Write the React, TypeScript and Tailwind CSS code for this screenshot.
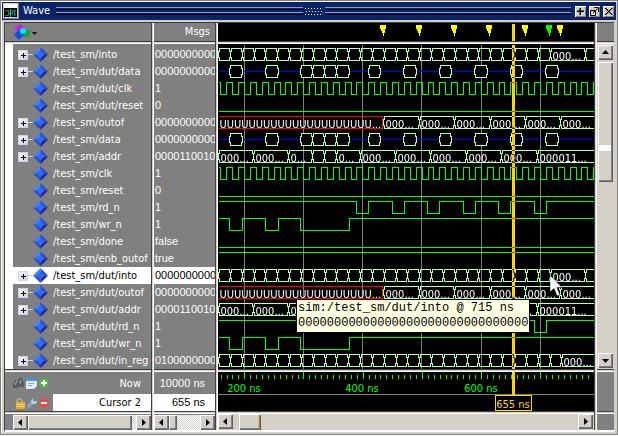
import React from 'react';

type Kind = 'into' | 'data' | 'clk' | 'low' | 'high' | 'outof' | 'addr' | 'rd' | 'wr' | 'inreg';
type Signal = { name: string; value: string; kind: Kind; bus?: boolean; selected?: boolean };

const SIGNALS: Signal[] = [
  { name: '/test_sm/into', value: '0000000000', kind: 'into', bus: true },
  { name: '/test_sm/dut/data', value: '0000000000', kind: 'data', bus: true },
  { name: '/test_sm/dut/clk', value: '1', kind: 'clk' },
  { name: '/test_sm/dut/reset', value: '0', kind: 'low' },
  { name: '/test_sm/outof', value: '0000000000', kind: 'outof', bus: true },
  { name: '/test_sm/data', value: '0000000000', kind: 'data', bus: true },
  { name: '/test_sm/addr', value: '0000110010', kind: 'addr', bus: true },
  { name: '/test_sm/clk', value: '1', kind: 'clk' },
  { name: '/test_sm/reset', value: '0', kind: 'low' },
  { name: '/test_sm/rd_n', value: '1', kind: 'rd' },
  { name: '/test_sm/wr_n', value: '1', kind: 'wr' },
  { name: '/test_sm/done', value: 'false', kind: 'low' },
  { name: '/test_sm/enb_outof', value: 'true', kind: 'high' },
  { name: '/test_sm/dut/into', value: '0000000000', kind: 'into', bus: true, selected: true },
  { name: '/test_sm/dut/outof', value: '0000000000', kind: 'outof', bus: true },
  { name: '/test_sm/dut/addr', value: '0000110010', kind: 'addr', bus: true },
  { name: '/test_sm/dut/rd_n', value: '1', kind: 'rd' },
  { name: '/test_sm/dut/wr_n', value: '1', kind: 'wr' },
  { name: '/test_sm/dut/in_reg', value: '0100000000', kind: 'inreg', bus: true },
];

/* Wave coordinates are relative to the left edge of the wave pane. */
const END = 376;
const STEP = 11.84;
const GRID = [26, 85, 144, 203, 263, 322];
const CURSOR = 294;

type Cell = [number, number, string?];
const steady: Cell[] = Array.from({ length: 28 }, (_, i): Cell => [
  Math.round(STEP * i),
  Math.round(STEP * (i + 1)),
]);
const CELLS: Record<string, Cell[]> = {
  into: [...steady, [332, 367, '000...'], [367, END + 6]],
  inreg: [...steady, [332, 343], [343, END + 6, '000...']],
  data: [
    [11, 24], [47, 60], [82, 94], [94, 106], [106, 118], [118, 131], [150, 162],
    [185, 198], [221, 233], [256, 269], [292, 304], [327, 340],
  ],
  outof: [
    [165, 201, '000...'], [201, 236, '000...'], [236, 272, '000...'],
    [272, 307, '000...'], [307, 342, '000...'], [342, END + 6, '000...'],
  ],
  addr: [
    [0, 35, '000...'], [35, 70, '000...'], [70, 94, '0...'], [94, 106], [106, 118],
    [118, 142, '0...'], [142, 177, '000...'], [177, 212, '000...'], [212, 248, '000...'],
    [248, 283, '000...'], [283, 319, '000...'], [319, END + 6, '000011...'],
  ],
};
const EDGES: Record<string, number[]> = {
  rd: [138, 150, 174, 186, 209, 221, 245, 257, 280, 292, 316, 328],
  wr: [11, 24, 47, 60, 82, 131],
  clk: Array.from({ length: 64 }, (_, i) => Math.round(2.3 + (STEP / 2) * i)),
  high: [],
};

function busCell([a, b]: Cell, top: number) {
  return `M${a} ${top + 3}H${a + 1}V${top}H${b - 1}V${top + 3}H${b}V${top + 9}H${b - 1}V${top + 12}H${a + 1}V${top + 9}H${a}Z`;
}

function Trace({ kind, top }: { kind: Kind; top: number }) {
  if (kind === 'low') return <path d={`M0 ${top + 12}H${END}`} stroke="#00ff00" />;
  if (kind in EDGES) {
    let low = false;
    let d = `M0 ${top}`;
    for (const x of EDGES[kind]) {
      if (x > END) break;
      low = !low;
      d += `H${x}V${low ? top + 12 : top}`;
    }
    return <path d={`${d}H${END}`} stroke="#00ff00" />;
  }
  return (
    <>
      {kind === 'data' && <path d={`M0 ${top + 6}H${END}`} stroke="#0000ff" />}
      {CELLS[kind].map((cell) => (
        <React.Fragment key={cell[0]}>
          <path d={busCell(cell, top)} stroke="#b4ffb4" fill={kind === 'data' ? '#000000' : 'none'} />
          {cell[2] && (
            <text x={cell[0] + 2} y={top + 11} fill="#ffffff" stroke="none">{cell[2]}</text>
          )}
        </React.Fragment>
      ))}
      {kind === 'outof' && (
        <>
          <path d={`M0 ${top}H164V${top + 12}H0`} stroke="#ff0000" />
          <text x={1} y={top + 11} fill="#ffffff" stroke="none">UUUUUUUUUUUUUUUUUUUUU...</text>
        </>
      )}
    </>
  );
}

function Waves() {
  return (
    <svg className="isolate block h-full w-full text-[11px]" fill="none" shapeRendering="crispEdges" aria-label="Waveforms">
      <g transform="translate(.5 .5)">
        {GRID.map((x) => <path key={x} d={`M${x} 0V325`} stroke="#808080" />)}
        {SIGNALS.map((s, i) => <Trace key={s.name} kind={s.kind} top={4 + i * 17} />)}
      </g>
      <rect x={CURSOR} y="1" width="3" height="324" fill="#ffd700" className="mix-blend-difference" />
    </svg>
  );
}

function Markers() {
  return (
    <svg className="block h-full w-full" shapeRendering="crispEdges" aria-label="Markers">
      {[165, 201, 236, 271, 307, 331, 342].map((x) => (
        <path
          key={x}
          transform={`translate(${x - 3} 2)`}
          fill={x === 331 ? '#00ff00' : '#ffff00'}
          d="M0 0H6V4H5V8H4V11H3V8H2V6H1V4H0Z"
        />
      ))}
      <rect x={CURSOR} y="1" width="3" height="17" fill="#ffd700" />
    </svg>
  );
}

function TimeScale() {
  return (
    <svg className="block h-full w-full text-[11px]" shapeRendering="crispEdges" aria-label="Time scale">
      {Array.from({ length: 63 }, (_, i) => {
        const major = i % 10 === 4;
        return (
          <rect key={i} x={Math.round(2.6 + i * 5.92)} y={major ? 0 : 3} width="1" height={major ? 7 : 4} fill="#00ff00" />
        );
      })}
      <rect x="0" y="22" width="100%" height="1" fill="#808080" />
      <g fill="#00ff00" textAnchor="middle">
        <text x="26" y="20">200 ns</text>
        <text x="144" y="20">400 ns</text>
        <text x="263" y="20">600 ns</text>
      </g>
      <rect x={CURSOR} y="0" width="3" height="23" fill="#ffd700" />
      <path d="M277.5 23.5H313.5V38.5H277.5Z" fill="#000000" stroke="#ffd700" />
      <text x="295" y="36" fill="#ffd700" textAnchor="middle">655 ns</text>
    </svg>
  );
}

const raised =
  'bg-[#d4d0c8] shadow-[inset_1px_1px_#ffffff,inset_-1px_-1px_#606060,inset_-2px_-2px_#808080]';

function Arrow({ dir, label }: { dir: 'left' | 'right' | 'up' | 'down'; label: string }) {
  const shapes = {
    left: 'M9 4V11L5 7.5Z',
    right: 'M6 4V11L10 7.5Z',
    up: 'M4 9H11L7.5 5Z',
    down: 'M4 6H11L7.5 10Z',
  };
  return (
    <button type="button" aria-label={label} className={`h-[15px] w-[15px] shrink-0 ${raised}`}>
      <svg className="block" width="15" height="15"><path d={shapes[dir]} fill="#000000" /></svg>
    </button>
  );
}

const trough = 'bg-[#d4d0c8] bg-[conic-gradient(#ffffff_25%,#d4d0c8_0_50%,#ffffff_0_75%,#d4d0c8_0)] bg-[length:2px_2px]';

function HSep() {
  return (
    <div className="h-[3px] shrink-0 border-t border-b border-t-[#404040] border-b-white bg-[#d4d0c8]" />
  );
}

function VSep() {
  return <div className="w-[3px] shrink-0 border-r border-l border-l-[#404040] border-r-white bg-[#d4d0c8]" />;
}

function Pane(props: {
  className: string;
  header: React.ReactNode;
  body: React.ReactNode;
  footer: React.ReactNode;
  scroll: React.ReactNode;
}) {
  return (
    <section className={`flex flex-col overflow-hidden ${props.className}`}>
      <div className="h-[18px] shrink-0">{props.header}</div>
      <HSep />
      <div className="h-[325px] shrink-0">{props.body}</div>
      <HSep />
      <div className="h-[39px] shrink-0">{props.footer}</div>
      <HSep />
      <div className="flex h-4 shrink-0 items-center">{props.scroll}</div>
    </section>
  );
}

function Diamond() {
  return (
    <svg width="15" height="15" className="shrink-0" aria-hidden="true">
      <path d="M7.5 0L0 7.5H7.5Z" fill="#4f7fe8" />
      <path d="M7.5 0L15 7.5H7.5Z" fill="#2b50c8" />
      <path d="M0 7.5L7.5 15V7.5Z" fill="#3050c0" />
      <path d="M15 7.5L7.5 15V7.5Z" fill="#20209a" />
      <path d="M7.5 3.5L11.5 7.5L7.5 11.5L3.5 7.5Z" fill="#2a6cff" />
    </svg>
  );
}

function NameRow({ s }: { s: Signal }) {
  return (
    <li className={`flex h-[17px] items-center pl-[5px] ${s.selected ? 'bg-white text-black' : ''}`}>
      <span className="flex w-[15px] shrink-0 items-center">
        {s.bus && (
          <>
            <button
              type="button"
              aria-label={`Expand ${s.name}`}
              className="h-[10px] w-[10px] shrink-0 rounded-[1px] bg-linear-to-br from-white to-[#c8d0e4] shadow-[inset_0_0_0_1px_#d0d4e0]"
            >
              <svg className="block" width="10" height="10" shapeRendering="crispEdges">
                <path d="M3 5H8V6H3ZM5 3H6V8H5Z" fill="#000000" />
              </svg>
            </button>
            <span className="h-px grow bg-[#d4d4d4]" />
          </>
        )}
      </span>
      <Diamond />
      <span className="pl-[5px] whitespace-nowrap">{s.name}</span>
    </li>
  );
}

function IconButton({ label, children }: { label: string; children: React.ReactNode }) {
  return (
    <button type="button" aria-label={label} className="h-3 w-3 shrink-0">
      <svg className="block" width="12" height="12">{children}</svg>
    </button>
  );
}

function TitleButton({ label, d }: { label: string; d: string }) {
  return (
    <button type="button" aria-label={label} className="h-[11px] w-[11px] bg-[#d4d0c8] shadow-[inset_1px_1px_#ffffff,inset_-1px_-1px_#808080]">
      <svg className="block" width="11" height="11" fill="none" stroke="#000000">
        <path d={d} />
      </svg>
    </button>
  );
}

function Groove() {
  return (
    <div className="flex grow flex-col gap-[2px]">
      <div className="h-[3px] border-t border-b border-t-[#8c9cc4] border-b-black" />
      <div className="h-[3px] border-t border-b border-t-[#8c9cc4] border-b-black" />
    </div>
  );
}

function TitleBar() {
  return (
    <header className="flex h-[18px] items-center bg-[#0a246a] pr-[2px] pl-[1px] text-white">
      <svg width="16" height="16" className="shrink-0" shapeRendering="crispEdges" aria-hidden="true">
        <path d="M0 0H16V16H0Z" fill="#808080" />
        <path d="M0 0H15V15H0Z" fill="#d4d0c8" />
        <path d="M1 1H14V5H1Z" fill="#ffffff" />
        <path d="M1 5H14V14H1Z" fill="#000000" />
        <path d="M2 7.5H5V10.5H9V7.5H13M2 12.5H5V10.5M11 7.5V11.5H13" fill="none" stroke="#109048" />
        <path d="M7.5 6V14" stroke="#00d0d0" />
        <path d="M9 12.5H13" stroke="#2020c0" />
      </svg>
      <h1 className="pr-[6px] pl-1 text-[11px] leading-4">Wave</h1>
      <Groove />
      <svg width="22" height="9" className="shrink-0" shapeRendering="crispEdges" aria-hidden="true">
        {[0, 1, 2].map((r) =>
          [0, 1, 2, 3, 4, 5].map((c) => (
            <rect key={`${r}${c}`} x={2 + c * 3 + (r % 2)} y={1 + r * 3} width="1" height="1" fill="#ffffff" />
          )),
        )}
      </svg>
      <Groove />
      <div className="flex gap-[3px] pl-1">
        <TitleButton label="Add" d="M2 5.5H9M5.5 2V9M5 2V9M2 5H9" />
        <TitleButton label="Undock" d="M1.5 4.5H6.5V9.5H1.5ZM4 7L8.5 2.5M5 1.5H9.5V6" />
        <TitleButton label="Close" d="M2 2L9 9M9 2L2 9M2.5 2L9.5 9M9.5 2L2.5 9" />
      </div>
    </header>
  );
}

export default function App() {
  return (
    <div className="relative w-full border border-[#808080] bg-[#d4d0c8] font-['DejaVu_Sans_Condensed','Liberation_Sans',sans-serif] text-[11px] leading-[17px] text-white">
      <div className="border-t border-l border-white pr-px">
        <TitleBar />
        <main className="mt-[2px] mr-[2px] ml-[2px] flex border-t border-b-2 border-l border-[#404040] border-b-white">
          <Pane
            className="w-[146px] shrink-0 bg-[#808080]"
            header={
              <button type="button" aria-label="Signal menu" className="block pl-2">
                <svg width="28" height="18">
                  <path d="M1 6L7 1L13 6L8 9Z" fill="#c820d8" />
                  <path d="M10 7H17V14H10Z" fill="#20a040" />
                  <path d="M6 6L12 11L6 17L1 12Z" fill="#1050e0" />
                  <circle cx="10" cy="8" r="3" fill="#00e8ff" />
                  <path d="M19 9H24L21.5 12Z" fill="#000000" />
                </svg>
              </button>
            }
            body={
              <ul className="h-full border-l-8 border-white pt-[2px]">
                {SIGNALS.map((s) => <NameRow key={s.name} s={s} />)}
              </ul>
            }
            footer={
              <>
                <div className="flex h-[22px] items-center pr-[10px] pl-2">
                  <IconButton label="Find">
                    <path d="M0 8L2 3H4L5 5L6 1H9L11 7V10H7L6 8L5 11H0Z" fill="#585c62" />
                    <path d="M2 8L4 4M7 7L8 3" stroke="#b0b8c0" />
                  </IconButton>
                  <IconButton label="Edit grid">
                    <path d="M1 1H12V9L9 12H1Z" fill="#e0ecfa" />
                    <path d="M1 1H12V4H1Z" fill="#5090e0" />
                    <path d="M3 6.5H9M3 8.5H7" stroke="#80a8d8" />
                  </IconButton>
                  <IconButton label="Insert cursor">
                    <circle cx="7" cy="6" r="5" fill="#50b848" />
                    <path d="M4 6H10M7 3V9" stroke="#ffffff" strokeWidth="2" />
                  </IconButton>
                  <span className="grow text-right">Now</span>
                </div>
                <div className="flex h-[17px] items-center pl-2">
                  <IconButton label="Lock cursor">
                    <path d="M4 6V3Q6 0 9 3V5" fill="none" stroke="#c8c8c8" />
                    <path d="M3 5H12V12H3Z" fill="#e8a828" />
                    <path d="M3 7.5H12M3 9.5H12" stroke="#f8d070" />
                  </IconButton>
                  <IconButton label="Edit cursor">
                    <path d="M3 10L8 5" stroke="#78a8e8" strokeWidth="3" />
                    <path d="M8 1L8 4L12 4L11 7H7L6 4Z" fill="#b8d0f0" />
                  </IconButton>
                  <IconButton label="Remove cursor">
                    <circle cx="7" cy="6" r="5" fill="#e05048" />
                    <path d="M4 6H10" stroke="#ffffff" strokeWidth="2" />
                  </IconButton>
                  <span className="ml-1 grow bg-white pr-[10px] text-right text-black">Cursor 2</span>
                </div>
              </>
            }
            scroll={
              <div className="ml-2 flex grow">
                <Arrow dir="left" label="Scroll names left" />
                <div className={`flex grow ${trough}`}>
                  <div className={`mr-1 grow ${raised}`} />
                </div>
                <Arrow dir="right" label="Scroll names right" />
              </div>
            }
          />
          <VSep />
          <Pane
            className="w-[61px] shrink-0 bg-[#808080] font-['Liberation_Sans',sans-serif]"
            header={
              <h2 className="pr-[5px] text-right font-['DejaVu_Sans_Condensed','Liberation_Sans',sans-serif]">Msgs</h2>
            }
            body={
              <ul className="pt-[2px]">
                {SIGNALS.map((s) => (
                  <li key={s.name} className={`h-[17px] overflow-hidden pl-[1px] ${s.selected ? 'bg-white text-black' : ''}`}>
                    {s.value}
                  </li>
                ))}
              </ul>
            }
            footer={
              <>
                <p className="h-[22px] pr-[10px] text-right leading-[22px]">10000 ns</p>
                <p className="h-[17px] bg-white pr-[10px] text-right text-black">655 ns</p>
              </>
            }
            scroll={
              <>
                <Arrow dir="left" label="Scroll values left" />
                <div className={`flex h-[15px] grow ${trough}`}>
                  <div className={`w-2 ${raised}`} />
                </div>
                <Arrow dir="right" label="Scroll values right" />
              </>
            }
          />
          <VSep />
          <Pane
            className="min-w-0 grow bg-black"
            header={<Markers />}
            body={<Waves />}
            footer={<TimeScale />}
            scroll={
              <div className="flex grow bg-[#d4d0c8] pr-px">
                <Arrow dir="left" label="Scroll waves left" />
                <div className="flex h-4 grow pl-[6px]">
                  <div className={`flex w-[22px] justify-end pr-[2px] ${raised}`}>
                    <div className="my-[2px] w-px bg-[#f0c830]" />
                  </div>
                </div>
                <Arrow dir="right" label="Scroll waves right" />
              </div>
            }
          />
          <VSep />
          <Pane
            className="w-[17px] shrink-0 bg-[#808080]"
            header={null}
            body={
              <div className="flex h-full flex-col items-center bg-[#d4d0c8] py-[1px]">
                <Arrow dir="up" label="Scroll up" />
                <div className="w-[15px] grow pt-[2px]">
                  <div className={`flex h-[120px] flex-col pt-[83px] ${raised}`}>
                    <div className="h-[6px] w-[13px] bg-white" />
                  </div>
                </div>
                <Arrow dir="down" label="Scroll down" />
              </div>
            }
            footer={null}
            scroll={null}
          />
        </main>
        <div className="h-[2px]" />
      </div>
      <div role="tooltip" className="absolute top-[299px] left-[296px] h-8 bg-[#ffffe1] px-[1px] font-['Liberation_Mono',monospace] text-[12px] leading-[15px] whitespace-nowrap text-black ring-1 ring-black">
        <p className="pt-[1px]">sim:/test_sm/dut/into @ 715 ns</p>
        <p>00000000000000000000000000000000</p>
      </div>
      <svg className="absolute top-[273px] left-[548px]" width="14" height="24" aria-hidden="true">
        <path d="M1 1V18L5 14.5L8 22L11 21L8 13.5H13Z" fill="#ffffff" stroke="#000000" strokeWidth=".5" />
      </svg>
    </div>
  );
}
